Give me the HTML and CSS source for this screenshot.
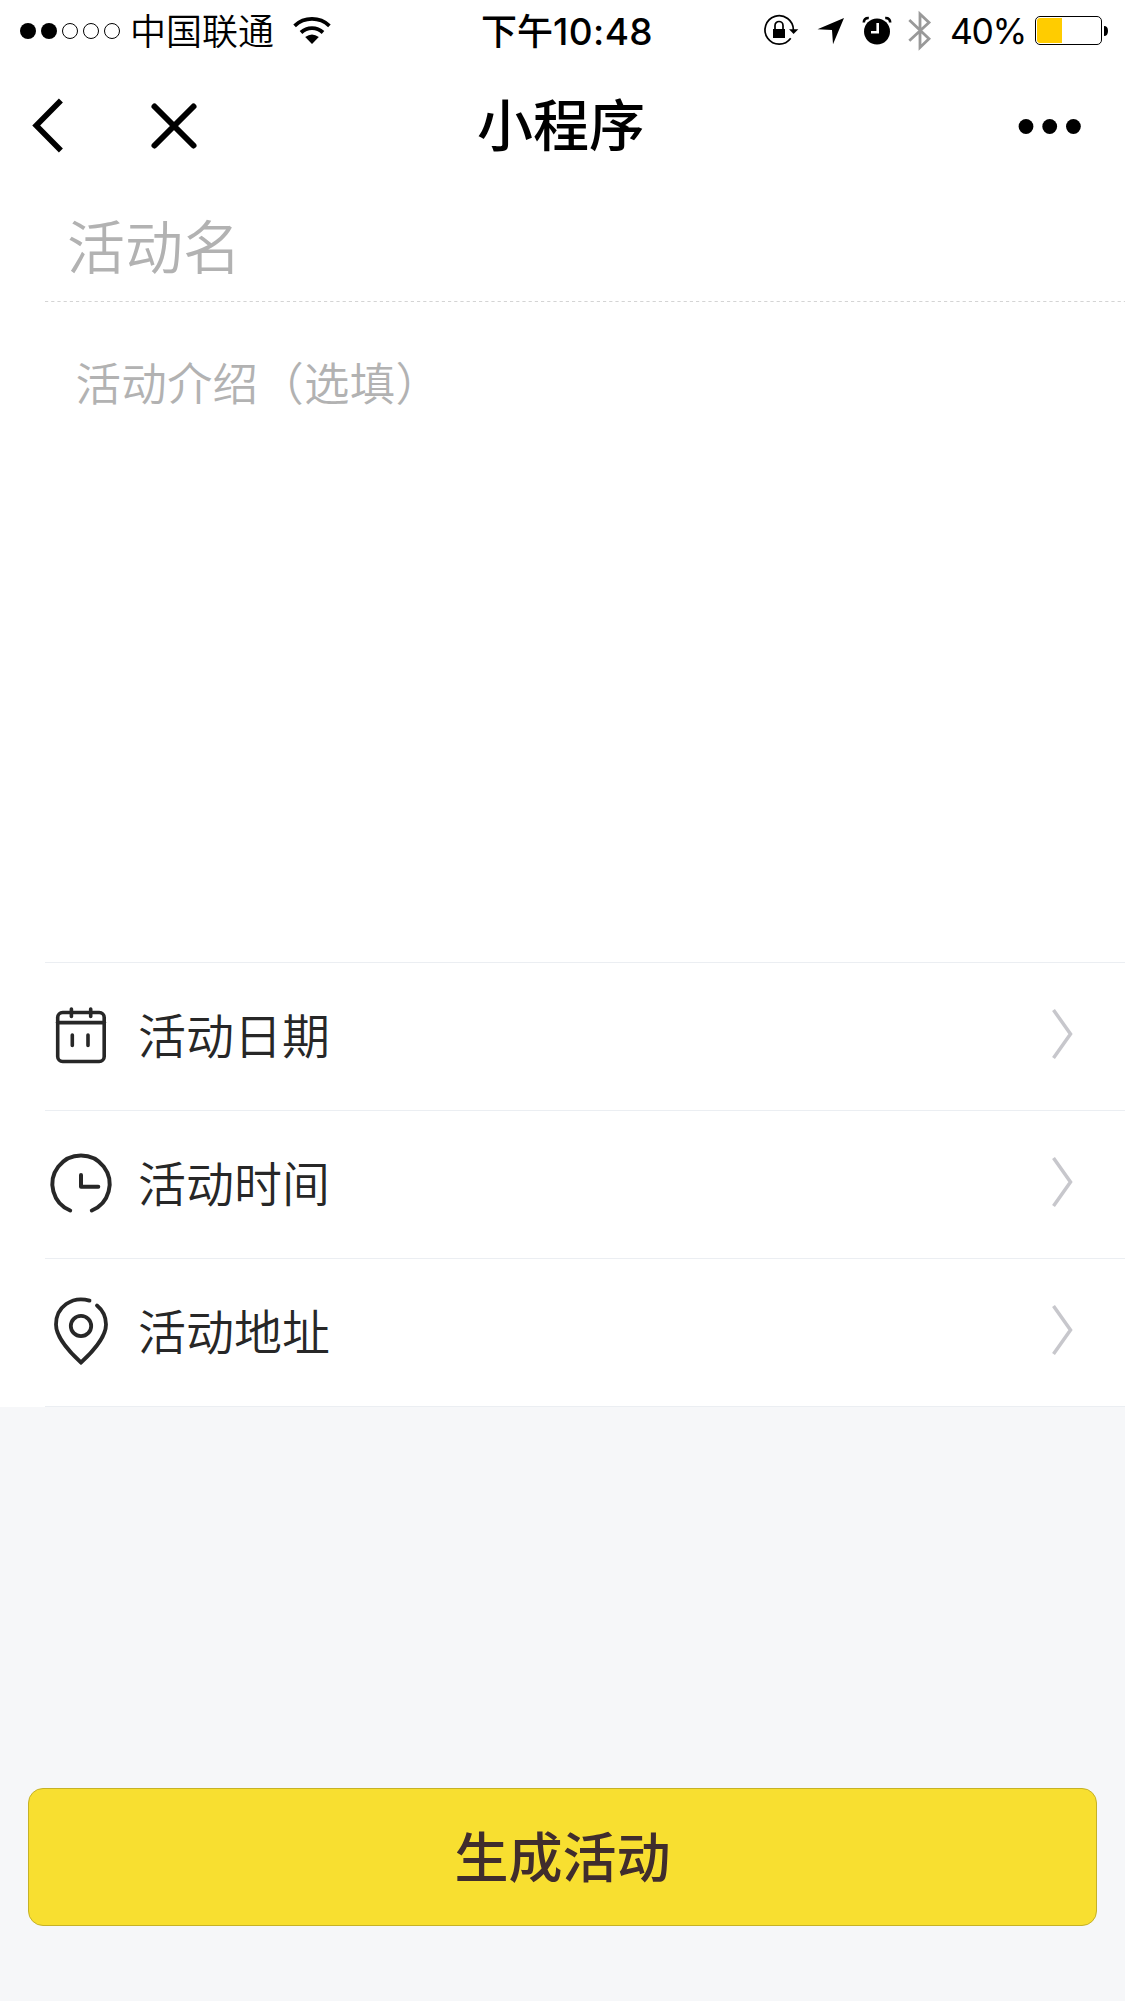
FILE: index.html
```html
<!DOCTYPE html>
<html lang="zh-CN">
<head>
<meta charset="utf-8">
<title>小程序</title>
<link rel="stylesheet" href="styles.css">
</head>
<body>
<div class="status">
  <div class="status-left">
    <svg class="signal" width="102" height="18" viewBox="0 0 102 18"><circle cx="9" cy="9" r="8"/><circle cx="30" cy="9" r="8"/><g fill="none" stroke="#000"><circle cx="51" cy="9" r="7.5"/><circle cx="72" cy="9" r="7.5"/><circle cx="93" cy="9" r="7.5"/></g></svg>
    <span class="carrier">中国联通</span>
    <svg class="wifi" width="38" height="28" viewBox="0 0 38 28"><g fill="none" stroke="#000" stroke-width="3.8"><path d="M1.6 8.800A25.500 25.500 0 0 1 36.400 8.800"/><path d="M8 15.500A16 16 0 0 1 30 15.500"/></g><path d="M12.200 20Q19 15 25.800 20L19 27Z"/></svg>
  </div>
  <div class="clock"><span class="ampm">下午</span><span class="digits">10:48</span></div>
  <div class="status-right">
    <svg class="lock" width="36" height="32" viewBox="0 0 36 32"><path d="M29.4 15A14.2 14.2 0 1 0 26.7 23.2" fill="none" stroke="#000" stroke-width="1.7"/><path d="M25 14.3H34.3L29.6 19Z"/><path d="M9 14H21V23H9Z"/><path d="M11 15V10.5A4 4 0 0 1 19 10.5V15" fill="none" stroke="#000" stroke-width="1.7"/></svg>
    <svg class="locate" width="28" height="28" viewBox="0 0 28 28"><path d="M27 1L16 27.3L15 13L.5 12.3Z"/></svg>
    <svg class="alarm" width="28" height="28" viewBox="0 0 28 28"><circle cx="14" cy="14.5" r="13"/><path d="M.8 5.5Q1 .8 5.8 1M22.200 1Q27 .8 27.200 5.500" fill="none" stroke="#000" stroke-width="2.600"/><path d="M14.700 6V15.200H8" fill="none" stroke="#fff" stroke-width="2.600"/></svg>
    <svg class="bluetooth" width="24" height="42" viewBox="0 0 24 42"><path d="M1.300 10L21 28.800L12 37.500V4L21 12.500L1.300 30.700" fill="none" stroke="#999" stroke-width="2.800"/></svg>
    <span class="percent">40%</span>
    <svg class="battery" width="74" height="30" viewBox="0 0 74 30"><rect x=".5" y=".5" width="66" height="28" rx="4.500" fill="#fff" stroke="#000"/><path d="M2 5Q2 2 5 2H27V27H5Q2 27 2 24Z" fill="#fc0"/><path d="M69 10Q73 10 73 15T69 20Z"/></svg>
  </div>
</div>
<div class="navbar">
  <div class="nav-left">
    <svg width="32" height="56" viewBox="0 0 32 56"><path d="M28.900 2.500L4.200 27.500L28.900 52.500" fill="none" stroke="#000" stroke-width="5.600"/></svg>
    <svg width="46" height="46" viewBox="0 0 46 46"><path d="M3.500 3.500L42.500 42.500M42.500 3.500L3.500 42.500" fill="none" stroke="#000" stroke-width="6" stroke-linecap="round"/></svg>
  </div>
  <h1 class="title">小程序</h1>
  <svg class="more" width="64" height="16" viewBox="0 0 64 16"><circle cx="8" cy="8.500" r="7.400"/><circle cx="31.700" cy="8.500" r="7.400"/><circle cx="55.400" cy="8.500" r="7.400"/></svg>
</div>
<main class="form">
  <div class="field name">
    <span class="name-text">活动名</span>
    <svg class="dashes" width="1080" height="1"><path d="M0 .5H1080" stroke="#d4d4d4" stroke-dasharray="3.200 3" fill="none"/></svg>
  </div>
  <div class="field intro">活动介绍（选填）</div>
  <div class="row">
    <svg class="icon" width="62" height="68" viewBox="0 0 62 68"><g fill="none" stroke="#272727" stroke-width="3.600" stroke-linecap="round"><rect x="7.700" y="9.500" width="46.500" height="49" rx="5"/><path d="M7.500 19.600H54.500M21.400 6V13.500M40.700 6V13.500M22.300 32V42.500M38 32V42.500"/></g></svg>
    <span class="label">活动日期</span>
    <svg class="chevron" width="22" height="52" viewBox="0 0 22 52"><path d="M1.500 2L18.500 26L1.500 50" fill="none" stroke="#c7c7cc" stroke-width="3.500"/></svg>
  </div>
  <div class="row">
    <svg class="icon" width="62" height="68" viewBox="0 0 62 68"><g fill="none" stroke="#272727" stroke-width="4" stroke-linecap="round" stroke-linejoin="round"><path d="M20.200 59.500A28.600 28.600 0 1 1 41.800 59.500"/><path d="M31 24V35.700H48.300"/></g></svg>
    <span class="label">活动时间</span>
    <svg class="chevron" width="22" height="52" viewBox="0 0 22 52"><path d="M1.500 2L18.500 26L1.500 50" fill="none" stroke="#c7c7cc" stroke-width="3.500"/></svg>
  </div>
  <div class="row">
    <svg class="icon" width="62" height="68" viewBox="0 0 62 68"><g fill="none" stroke="#272727" stroke-width="3.800" stroke-linecap="round" stroke-linejoin="miter"><path d="M39.500 1.600C22 -3.500 6 8 6 25.500C6 38 20.500 54 31 63.500C41.500 54 56 38 56 25.500C56 17.500 52.500 11 47 6.500"/><circle cx="31" cy="27" r="10.200"/></g></svg>
    <span class="label">活动地址</span>
    <svg class="chevron" width="22" height="52" viewBox="0 0 22 52"><path d="M1.500 2L18.500 26L1.500 50" fill="none" stroke="#c7c7cc" stroke-width="3.500"/></svg>
  </div>
</main>
<button class="submit" type="button">生成活动</button>
</body>
</html>
```
FILE: styles.css
```css
* { box-sizing: border-box; }
body {
  margin: 0;
  height: 2001px;
  overflow: hidden;
  background: #f6f7f9;
  color: #000;
  font-family: "Noto Sans CJK SC", sans-serif;
  font-weight: 350;
}
svg { display: block; flex: none; overflow: visible; }

.status {
  display: grid;
  grid-template-columns: 1fr auto 1fr;
  align-items: center;
  height: 61px;
  background: #fff;
  font-size: 36px;
  line-height: 58px;
  white-space: nowrap;
}
.status-left, .status-right, .clock { display: flex; align-items: center; height: 61px; }
.status-left { padding-left: 19px; }
.carrier { margin-left: 9px; padding-bottom: 3px; }
.wifi { margin-left: 19px; }
.clock { font-weight: 500; padding-left: 9px; }
.ampm { padding-bottom: 3px; }
.digits { padding-top: 2px; font: 550 37px/60px Inter, sans-serif; letter-spacing: .4px; }
.status-right { justify-content: flex-end; padding-right: 16px; }
.locate { margin-left: 17px; }
.alarm { margin-left: 18px; }
.bluetooth { margin-left: 17px; }
.percent { margin: 0 9px 0 18px; padding-top: 2px; font: 400 35.5px/60px Inter, sans-serif; letter-spacing: -1.4px; }

.navbar {
  display: grid;
  grid-template-columns: 1fr auto 1fr;
  align-items: center;
  height: 129px;
  background: #fff;
}
.nav-left { display: flex; align-items: center; gap: 87px; padding-left: 32px; }
.title { margin: 0; padding: 0 3px 7px 0; font-size: 56px; font-weight: 500; line-height: 120px; }
.more { justify-self: end; margin-right: 43px; }

.form { background: #fff; }
.field { color: #b2b2b2; }
.name {
  display: flex;
  flex-direction: column;
  justify-content: space-between;
  height: 112px;
  margin-left: 45px;
  overflow: hidden;
}
.name-text { padding-left: 22px; font-size: 58px; line-height: 108px; }
.intro { height: 660px; padding: 46px 0 0 75.5px; font-size: 45.5px; line-height: 66px; letter-spacing: .2px; }
.row {
  display: flex;
  align-items: center;
  height: 148px;
  margin-left: 45px;
  padding-right: 51px;
  border-top: 1px solid #ebeef2;
}
.row:last-child { height: 149px; border-bottom: 1px solid #ebeef2; }
.icon { margin-left: 5px; }
.label { margin-left: 26px; padding-bottom: 8px; color: #272727; font-size: 48px; line-height: 70px; }
.chevron { margin: 0 0 6px auto; }

.submit {
  display: block;
  width: 1069px;
  height: 138px;
  margin: 381px 28px 0;
  padding: 0 0 6px;
  border: 1.5px solid #c6b227;
  border-radius: 15px;
  background: #f8df30;
  color: #402d2d;
  font: 500 54px/129px "Noto Sans CJK SC", sans-serif;
}
```
